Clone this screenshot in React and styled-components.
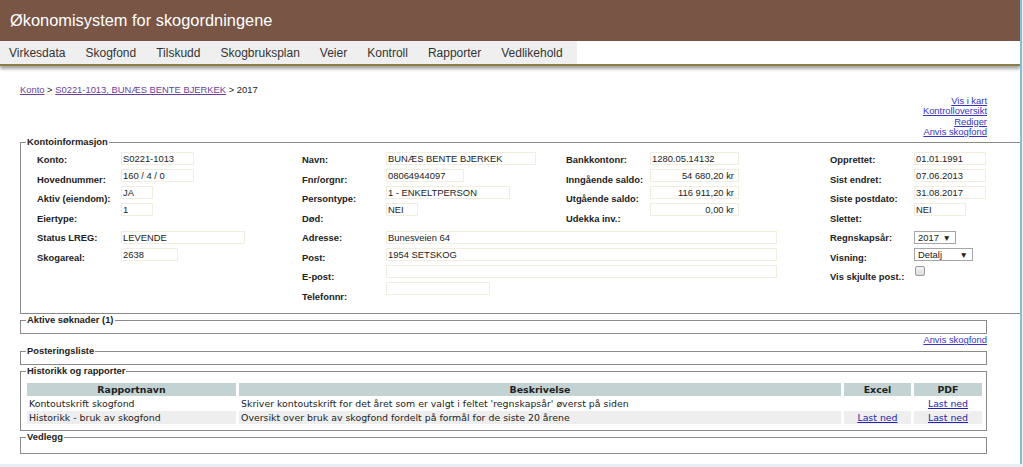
import React from "react";
import styled, { createGlobalStyle } from "styled-components";

const GlobalStyle = createGlobalStyle`
  body {
    margin: 0;
    background: #e2f1f6;
    font-family: "Liberation Sans", Arial, sans-serif;
    font-size: 9.4px;
    color: #222;
  }
`;

const Page = styled.div`
  width: 1020px;
  background: #fff;
  border-right: 2px solid #7fc2d3;
  padding-bottom: 10px;
  overflow: hidden;
`;

const Header = styled.header`
  height: 41px;
  background: #785545;
  display: flex;
  align-items: center;
  padding-left: 10px;

  h1 {
    margin: 0;
    font-size: 16.4px;
    font-weight: normal;
    color: #fff;
  }
`;

const Nav = styled.nav`
  height: 23px;
  border-bottom: 2px solid #8c7f44;
  box-shadow: 0 3px 3px rgba(0, 0, 0, 0.35);

  ul {
    margin: 0;
    padding: 0 4px 0 0;
    display: inline-flex;
    height: 100%;
    background: #efefef;
    list-style: none;
  }

  li {
    display: flex;
    align-items: center;
    padding: 0 10px;
    font-size: 12px;
    color: #333;
  }

  li:first-child {
    padding-left: 9px;
  }
`;

const Content = styled.main`
  padding: 18px 33px 0 20px;
`;

const Crumbs = styled.div`
  line-height: 12px;

  a {
    color: #6b3f9b;
  }
`;

const SideLinks = styled.div`
  display: flex;
  flex-direction: column;
  align-items: flex-end;
  line-height: 10.33px;
  margin-bottom: -1px;

  a {
    color: #3434c8;
  }
`;

const Box = styled.fieldset`
  margin: ${(p) => (p.$wide ? "0 -35px 0 0" : "0")};
  padding: ${(p) => p.$pad || "2px 6px 5px"};
  border: 1px solid #8a8a8a;
  min-width: 0;

  legend {
    padding: 0 1px;
    margin-left: -1px;
    font-weight: bold;
    line-height: 12px;
  }
`;

const RightLink = styled.div`
  text-align: right;
  line-height: 11px;

  a {
    color: #3434c8;
  }
`;

const InfoGrid = styled.div`
  display: grid;
  grid-template-columns: 265px 264px 264px auto;
  margin-left: 10px;
`;

const Column = styled.div`
  display: flex;
`;

const Labels = styled.div`
  width: 84px;
  flex-shrink: 0;
  display: flex;
  flex-direction: column;
`;

const Label = styled.div`
  font-weight: bold;
  line-height: 19.5px;
  white-space: nowrap;
`;

const Values = styled.div`
  padding-top: 2px;
  display: flex;
  flex-direction: column;
  align-items: flex-start;
  gap: 4px;
`;

const Field = styled.div`
  width: ${(p) => p.$w}px;
  height: 13px;
  box-sizing: border-box;
  border: 1px solid #f1eedf;
  padding: 0 ${(p) => (p.$right ? "4px" : "1px")};
  text-align: ${(p) => (p.$right ? "right" : "left")};
  line-height: 11px;
  white-space: nowrap;
  overflow: hidden;
`;

const Gap = styled.div`
  height: 7px;
`;

const Select = styled.div`
  width: ${(p) => p.$w}px;
  height: 13px;
  box-sizing: border-box;
  border: 1px solid #a4a4a4;
  display: flex;
  justify-content: space-between;
  align-items: center;
  padding: 0 4px 0 3px;
  font-size: 9.4px;

  span {
    font-size: 8.5px;
    line-height: 1;
  }
`;

const Check = styled.div`
  width: 10px;
  height: 10px;
  margin: 1px 0 0 1px;
  box-sizing: border-box;
  border: 1px solid #9a9a9a;
  border-radius: 2px;
  background: linear-gradient(#f4f4f4, #dcdcdc);
`;

const Reports = styled.table`
  width: calc(100% + 6px);
  margin: -1px -3px;
  border-spacing: 3px 1px;
  font-family: "DejaVu Sans", Verdana, sans-serif;
  font-size: 9.4px;
  table-layout: fixed;

  th,
  td {
    height: 13px;
    padding: 0 2px;
    line-height: 13px;
    white-space: nowrap;
    overflow: hidden;
  }

  th {
    background: #c3d3d4;
    font-weight: bold;
    text-align: center;
  }

  tbody tr:nth-child(even) td {
    background: #eeeeee;
  }

  td.c {
    text-align: center;
  }

  a {
    color: #2323b5;
  }
`;

const col1 = [
  ["Konto:", "S0221-1013", 73],
  ["Hovednummer:", "160 / 4 / 0", 73],
  ["Aktiv (eiendom):", "JA", 32],
  ["Eiertype:", "1", 32],
  ["Status LREG:", "LEVENDE", 124],
  ["Skogareal:", "2638", 57],
];

const col2 = [
  ["Navn:", "BUNÆS BENTE BJERKEK", 150],
  ["Fnr/orgnr:", "08064944097", 78],
  ["Persontype:", "1 - ENKELTPERSON", 124],
  ["Død:", "NEI", 32],
  ["Adresse:", "Bunesveien 64", 391],
  ["Post:", "1954 SETSKOG", 391],
  ["E-post:", "", 391],
  ["Telefonnr:", "", 104],
];

const col3 = [
  ["Bankkontonr:", "1280.05.14132", 89, false],
  ["Inngående saldo:", "54 680,20 kr", 89, true],
  ["Utgående saldo:", "116 911,20 kr", 89, true],
  ["Udekka inv.:", "0,00 kr", 89, true],
];

const col4 = [
  ["Opprettet:", "01.01.1991", 72],
  ["Sist endret:", "07.06.2013", 72],
  ["Siste postdato:", "31.08.2017", 72],
  ["Slettet:", "NEI", 52],
];

const InfoColumn = ({ rows, extra = [], children }) => (
  <Column>
    <Labels>
      {rows.map(([l]) => (
        <Label key={l}>{l}</Label>
      ))}
      {extra.map((l) => (
        <Label key={l}>{l}</Label>
      ))}
    </Labels>
    <Values>
      {rows.slice(0, 4).map(([l, v, w, r]) => (
        <Field key={l} $w={w} $right={r}>
          {v}
        </Field>
      ))}
      {(rows.length > 4 || children) && <Gap />}
      {rows.slice(4).map(([l, v, w, r]) => (
        <Field key={l} $w={w} $right={r}>
          {v}
        </Field>
      ))}
      {children}
    </Values>
  </Column>
);

const reports = [
  {
    name: "Kontoutskrift skogfond",
    desc: "Skriver kontoutskrift for det året som er valgt i feltet 'regnskapsår' øverst på siden",
    excel: false,
  },
  {
    name: "Historikk - bruk av skogfond",
    desc: "Oversikt over bruk av skogfond fordelt på formål for de siste 20 årene",
    excel: true,
  },
];

const menu = [
  "Virkesdata",
  "Skogfond",
  "Tilskudd",
  "Skogbruksplan",
  "Veier",
  "Kontroll",
  "Rapporter",
  "Vedlikehold",
];

export default function App() {
  return (
    <>
      <GlobalStyle />
      <Page>
        <Header>
          <h1>Økonomisystem for skogordningene</h1>
        </Header>
        <Nav>
          <ul>
            {menu.map((m) => (
              <li key={m}>{m}</li>
            ))}
          </ul>
        </Nav>

        <Content>
          <Crumbs>
            <a href="#">Konto</a> &gt;{" "}
            <a href="#">S0221-1013, BUNÆS BENTE BJERKEK</a> &gt; 2017
          </Crumbs>
          <SideLinks>
            <a href="#">Vis i kart</a>
            <a href="#">Kontrolloversikt</a>
            <a href="#">Rediger</a>
            <a href="#">Anvis skogfond</a>
          </SideLinks>

          <Box $wide $pad="2px 6px 7px">
            <legend>Kontoinformasjon</legend>
            <InfoGrid>
              <InfoColumn rows={col1} />
              <InfoColumn rows={col2} />
              <InfoColumn rows={col3} />
              <InfoColumn
                rows={col4}
                extra={["Regnskapsår:", "Visning:", "Vis skjulte post.:"]}
              >
                <Select $w={42}>
                  2017 <span>▼</span>
                </Select>
                <Select $w={59}>
                  Detalj <span>▼</span>
                </Select>
                <Check />
              </InfoColumn>
            </InfoGrid>
          </Box>

          <Box>
            <legend>Aktive søknader (1)</legend>
          </Box>
          <RightLink>
            <a href="#">Anvis skogfond</a>
          </RightLink>
          <Box>
            <legend>Posteringsliste</legend>
          </Box>

          <Box $pad="6px 6px 6px">
            <legend>Historikk og rapporter</legend>
            <Reports>
              <colgroup>
                <col style={{ width: 209 }} />
                <col style={{ width: 602 }} />
                <col style={{ width: 67 }} />
                <col style={{ width: 68 }} />
              </colgroup>
              <thead>
                <tr>
                  <th>Rapportnavn</th>
                  <th>Beskrivelse</th>
                  <th>Excel</th>
                  <th>PDF</th>
                </tr>
              </thead>
              <tbody>
                {reports.map((r) => (
                  <tr key={r.name}>
                    <td>{r.name}</td>
                    <td>{r.desc}</td>
                    <td className="c">{r.excel && <a href="#">Last ned</a>}</td>
                    <td className="c">
                      <a href="#">Last ned</a>
                    </td>
                  </tr>
                ))}
              </tbody>
            </Reports>
          </Box>

          <Box $pad="2px 6px 8px">
            <legend>Vedlegg</legend>
          </Box>
        </Content>
      </Page>
    </>
  );
}
